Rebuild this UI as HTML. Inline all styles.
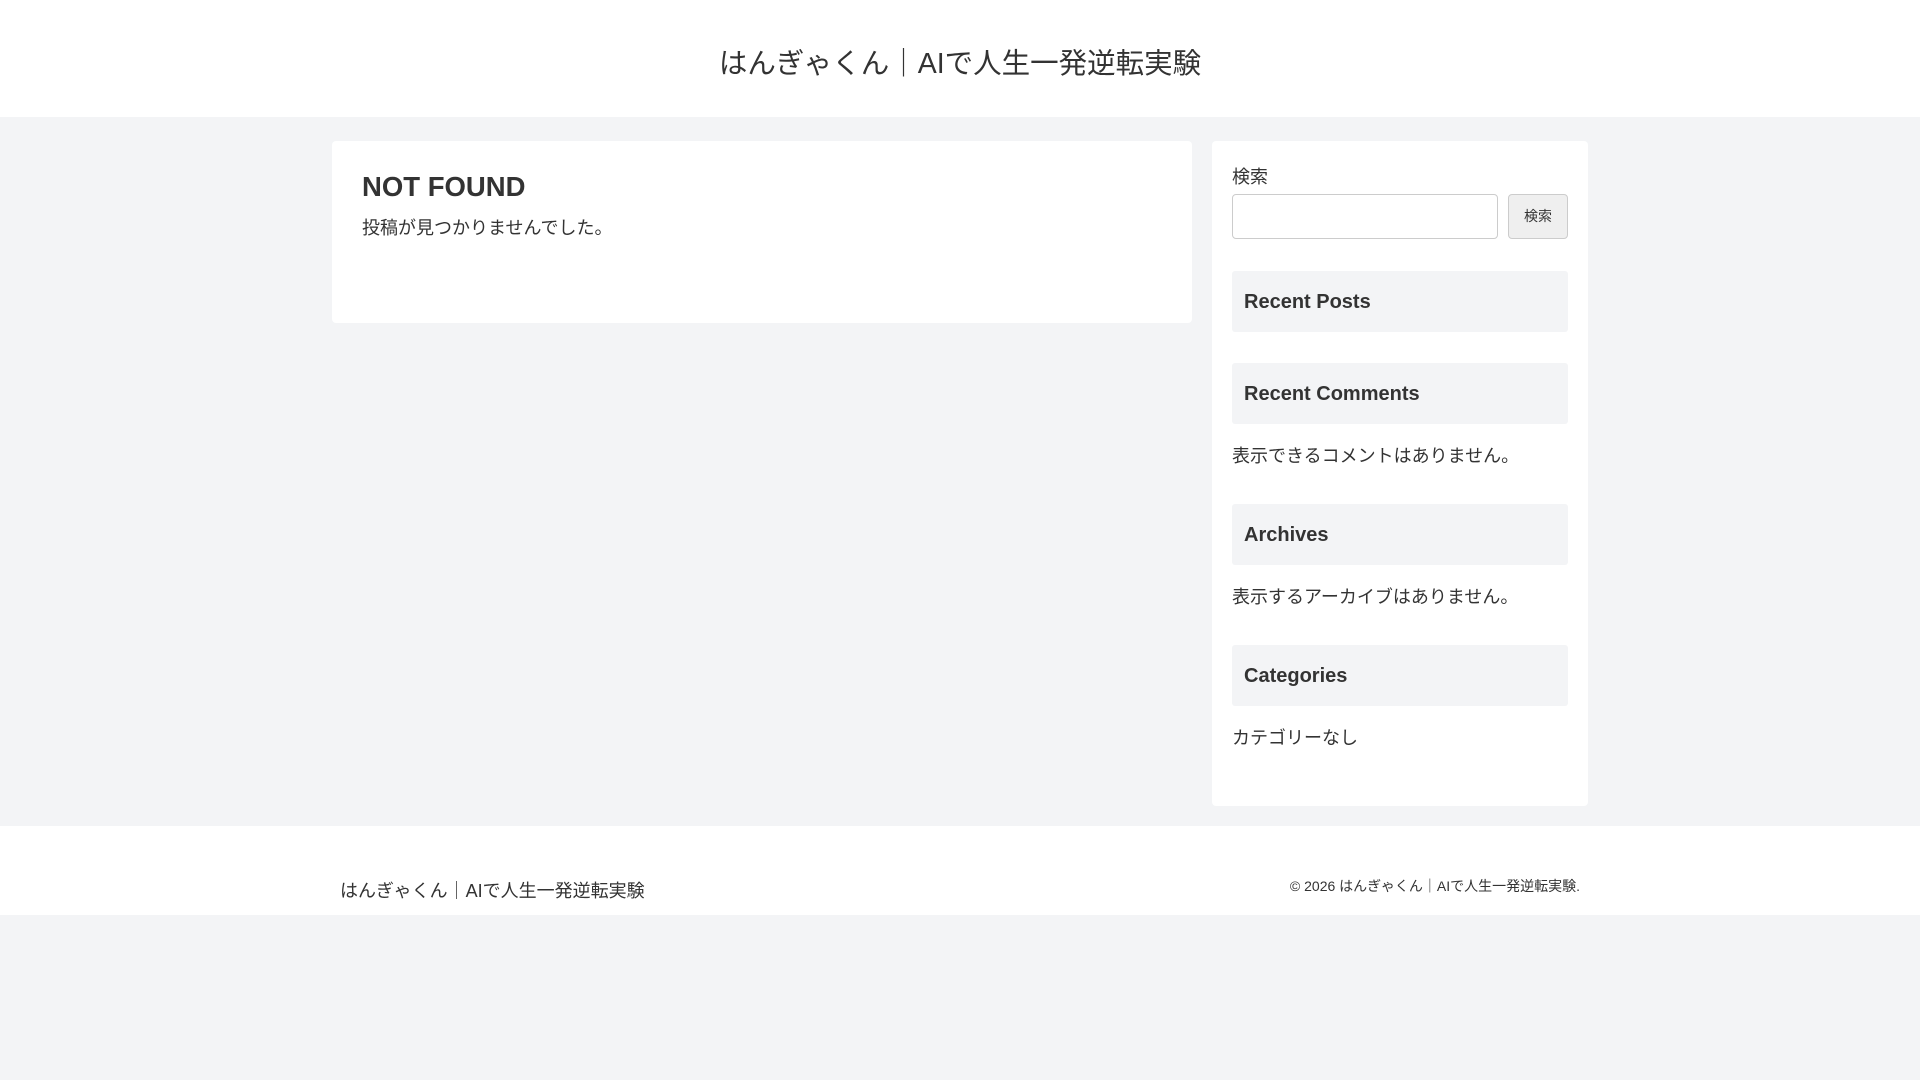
<!DOCTYPE html>
<html><head><meta charset="utf-8"><style>
*{margin:0;padding:0;box-sizing:border-box}
body{width:1920px;height:1080px;background:#f3f4f6;color:#333;font-family:"Liberation Sans","Noto Sans CJK JP",sans-serif;position:relative;overflow:hidden}
.hdr{position:absolute;left:0;top:0;width:1920px;height:117px;background:#fff}
.title{position:absolute;left:0;width:1920px;top:46px;text-align:center;font-size:28.5px;line-height:36px}
.main{position:absolute;left:332px;top:141px;width:860px;height:182px;background:#fff;border-radius:4px}
.main h1{position:absolute;left:30px;top:29px;font-size:27.5px;line-height:34px;font-weight:bold}
.side{position:absolute;left:1212px;top:141px;width:376px;height:665px;background:#fff;border-radius:4px}
.s{position:absolute;font-size:18px;line-height:24px}
.inp{position:absolute;left:20px;top:53px;width:266px;height:45px;border:1px solid #ccc;border-radius:4px;background:#fff}
.btn{position:absolute;left:296px;top:53px;width:60px;height:45px;border:1px solid #ccc;border-radius:4px;background:#efefef;font-size:14px;text-align:center;line-height:43px}
.box{position:absolute;left:20px;width:336px;height:61px;background:#f3f4f6;border-radius:3px;font-size:20px;font-weight:bold;line-height:63px;padding-left:12px}
.ftr{position:absolute;left:0;top:826px;width:1920px;height:89px;background:#fff}
</style></head><body>
<div class="hdr"><div class="title">はんぎゃくん｜AIで人生一発逆転実験</div></div>
<div class="main"><h1>NOT FOUND</h1><div class="s" style="left:30px;top:75px">投稿が見つかりませんでした。</div></div>
<div class="side">
<div class="s" style="left:20px;top:24px">検索</div>
<div class="inp"></div><div class="btn">検索</div>
<div class="box" style="top:130px">Recent Posts</div>
<div class="box" style="top:222px">Recent Comments</div>
<div class="s" style="left:20px;top:303px">表示できるコメントはありません。</div>
<div class="box" style="top:363px">Archives</div>
<div class="s" style="left:20px;top:444px">表示するアーカイブはありません。</div>
<div class="box" style="top:504px">Categories</div>
<div class="s" style="left:20px;top:585px">カテゴリーなし</div>
</div>
<div class="ftr">
<div class="s" style="left:340px;top:53px">はんぎゃくん｜AIで人生一発逆転実験</div>
<div style="position:absolute;right:340px;top:51px;font-size:14px;line-height:18px">© 2026 はんぎゃくん｜AIで人生一発逆転実験.</div>
</div>
</body></html>
